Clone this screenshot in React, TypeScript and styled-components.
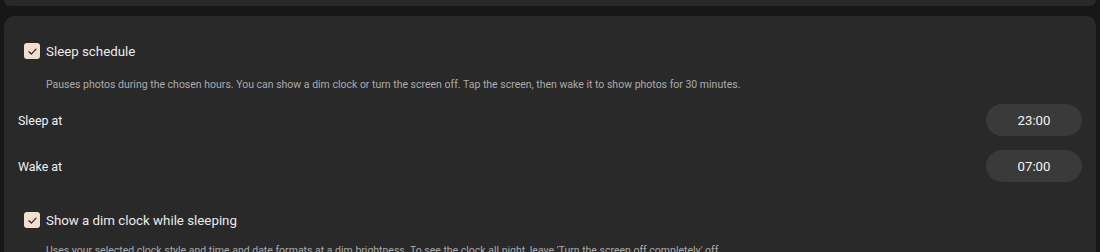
import React, { useState } from 'react';
import styled, { createGlobalStyle } from 'styled-components';

const GlobalStyle = createGlobalStyle`
  html, body {
    margin: 0;
    padding: 0;
    background: #171717;
    font-family: Roboto, "Noto Sans", "Liberation Sans", sans-serif;
  }
`;

const Page = styled.div`
  display: flex;
  flex-direction: column;
  gap: 10px;
  padding: 0 4px;
  height: 252px;
  overflow: hidden;
`;

const CardTail = styled.div`
  flex-shrink: 0;
  height: 6px;
  background: #292929;
  border-radius: 0 0 10px 10px;
`;

const Card = styled.section`
  flex-shrink: 0;
  background: #292929;
  border-radius: 10px;
  padding: 15px 14px 20px;
  display: flex;
  flex-direction: column;
`;

const CheckRow = styled.label<{ $top?: number }>`
  display: flex;
  align-items: center;
  gap: 6px;
  height: 40px;
  padding-left: 6px;
  margin-top: ${(p) => p.$top ?? 0}px;
  color: #ebebeb;
  font-size: 13.3px;
  cursor: pointer;
`;

const Box = styled.span`
  width: 16px;
  height: 16px;
  border-radius: 3px;
  background: #f1dfcf;
  display: flex;
  align-items: center;
  justify-content: center;
`;

const Hint = styled.p<{ $top?: number }>`
  margin: ${(p) => p.$top ?? 6}px 0 0 28px;
  font-size: 10.5px;
  line-height: 16px;
  color: #ababab;
`;

const TimeRows = styled.div`
  display: flex;
  flex-direction: column;
  gap: 14px;
  margin-top: 11px;
`;

const TimeRow = styled.div`
  display: flex;
  align-items: center;
  justify-content: space-between;
  height: 32px;
`;

const Label = styled.span`
  color: #f0f0f0;
  font-size: 12.4px;
`;

const Pill = styled.button`
  width: 96px;
  height: 32px;
  border: none;
  border-radius: 16px;
  background: #3a3a3a;
  color: #f4f4f4;
  font-family: inherit;
  font-size: 13.2px;
`;

function Check({ on }: { on: boolean }) {
  return (
    <Box>
      {on && (
        <svg width="11" height="11" viewBox="0 0 12 12" fill="none">
          <path d="M2.2 6.3 L4.8 8.8 L9.8 3.4" stroke="#2b2b2b" strokeWidth="1.4" strokeLinecap="round" strokeLinejoin="round" />
        </svg>
      )}
    </Box>
  );
}

export default function App() {
  const [sleep, setSleep] = useState(true);
  const [dim, setDim] = useState(true);

  return (
    <>
      <GlobalStyle />
      <Page>
        <CardTail />
        <Card>
          <CheckRow onClick={() => setSleep(!sleep)}>
            <Check on={sleep} />
            Sleep schedule
          </CheckRow>
          <Hint>
            Pauses photos during the chosen hours. You can show a dim clock or turn the screen off. Tap the screen, then wake it to show photos for 30 minutes.
          </Hint>
          <TimeRows>
            <TimeRow>
              <Label>Sleep at</Label>
              <Pill>23:00</Pill>
            </TimeRow>
            <TimeRow>
              <Label>Wake at</Label>
              <Pill>07:00</Pill>
            </TimeRow>
          </TimeRows>
          <CheckRow $top={18} onClick={() => setDim(!dim)}>
            <Check on={dim} />
            Show a dim clock while sleeping
          </CheckRow>
          <Hint $top={3}>
            Uses your selected clock style and time and date formats at a dim brightness. To see the clock all night, leave 'Turn the screen off completely' off.
          </Hint>
        </Card>
      </Page>
    </>
  );
}
